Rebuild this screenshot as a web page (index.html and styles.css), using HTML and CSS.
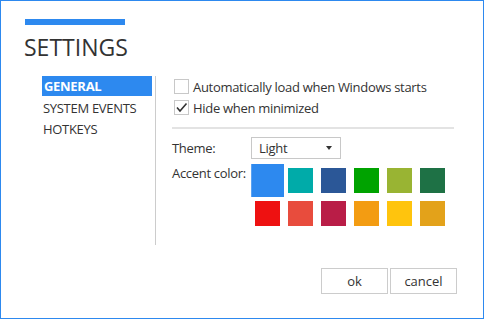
FILE: index.html
```html
<!DOCTYPE html>
<html lang="en">
<head>
    <meta charset="UTF-8">
    <meta name="viewport" content="width=device-width, initial-scale=1.0">
    <title>Settings</title>
    <link rel="stylesheet" href="styles.css">
</head>
<body>
    <div class="window">
        <div class="accent-bar"></div>
        <h1 class="title">SETTINGS</h1>

        <div class="main">
            <ul class="nav">
                <li class="nav-item active">GENERAL</li>
                <li class="nav-item">SYSTEM EVENTS</li>
                <li class="nav-item">HOTKEYS</li>
            </ul>

            <div class="content">
                <label class="check-row">
                    <span class="checkbox"></span>
                    <span>Automatically load when Windows starts</span>
                </label>
                <label class="check-row">
                    <span class="checkbox">
                        <svg width="13" height="13" viewBox="0 0 13 13"><path d="M2 6.5 L5 10 L11.5 2.5" fill="none" stroke="#333" stroke-width="1.6"/></svg>
                    </span>
                    <span>Hide when minimized</span>
                </label>

                <div class="separator"></div>

                <div class="field-row">
                    <span class="field-label">Theme:</span>
                    <div class="dropdown">
                        <span>Light</span>
                        <span class="arrow"></span>
                    </div>
                </div>

                <div class="field-row accent-row">
                    <span class="field-label">Accent color:</span>
                    <div class="swatches">
                        <div class="swatch selected"><span style="background:#2d89ef"></span></div>
                        <div class="swatch"><span style="background:#00aba9"></span></div>
                        <div class="swatch"><span style="background:#2b5797"></span></div>
                        <div class="swatch"><span style="background:#00a300"></span></div>
                        <div class="swatch"><span style="background:#99b433"></span></div>
                        <div class="swatch"><span style="background:#1e7145"></span></div>
                        <div class="swatch"><span style="background:#ee1111"></span></div>
                        <div class="swatch"><span style="background:#e84c3d"></span></div>
                        <div class="swatch"><span style="background:#b91d47"></span></div>
                        <div class="swatch"><span style="background:#f39c12"></span></div>
                        <div class="swatch"><span style="background:#ffc40d"></span></div>
                        <div class="swatch"><span style="background:#e3a21a"></span></div>
                    </div>
                </div>
            </div>
        </div>

        <div class="buttons">
            <button class="btn">ok</button>
            <button class="btn">cancel</button>
        </div>
    </div>
</body>
</html>
```

FILE: styles.css
```css
html, body {
    margin: 0;
    padding: 0;
    background: white;
}

.window {
    width: 484px;
    height: 319px;
    box-sizing: border-box;
    border: 1px solid #2d89ef;
    padding: 18px 25px 0 24px;
    font-family: "Open Sans", sans-serif;
    font-size: 13px;
    letter-spacing: -0.3px;
    color: #333;
    display: flex;
    flex-direction: column;
}

.accent-bar {
    width: 100px;
    height: 6px;
    background: #2d89ef;
}

.title {
    margin: 6px 0 0 -1px;
    font-size: 23px;
    font-weight: 400;
    line-height: 32px;
    letter-spacing: 0;
    color: #333;
}

.main {
    display: flex;
    margin-top: 13px;
    margin-left: 17px;
}

.nav {
    list-style: none;
    margin: 0;
    padding: 0 3px 0 0;
    width: 110px;
    height: 169px;
    border-right: 1px solid #ccc;
}

.nav-item {
    height: 21px;
    line-height: 22px;
    padding-left: 1px;
}

.nav-item.active {
    height: 20px;
    line-height: 20px;
    margin-bottom: 1px;
    padding-left: 2px;
    background: #2d89ef;
    color: white;
    font-weight: bold;
}

.content {
    margin-left: 16px;
    width: 282px;
}

.check-row {
    display: flex;
    align-items: center;
    height: 21px;
    padding-left: 2px;
}

.checkbox {
    width: 13px;
    height: 13px;
    border: 1px solid #c8c8c8;
    margin-right: 4px;
    display: flex;
    align-items: center;
    justify-content: center;
}

.separator {
    height: 2px;
    background: #e3e3e3;
    margin-top: 9px;
}

.field-row {
    display: flex;
    margin-top: 8px;
}

.field-label {
    width: 79px;
    line-height: 22px;
    white-space: nowrap;
}

.dropdown {
    width: 73px;
    height: 20px;
    border: 1px solid #c8c8c8;
    display: flex;
    align-items: center;
    justify-content: space-between;
    padding: 0 8px 0 7px;
}

.arrow {
    width: 0;
    height: 0;
    border-left: 3.5px solid transparent;
    border-right: 3.5px solid transparent;
    border-top: 4px solid #333;
}

.accent-row {
    margin-top: 5px;
}

.accent-row .field-label {
    line-height: 18px;
}

.swatches {
    display: grid;
    grid-template-columns: repeat(6, 33px);
    grid-auto-rows: 33px;
}

.swatch {
    padding: 4px;
}

.swatch span {
    display: block;
    width: 100%;
    height: 100%;
}

.swatch.selected {
    padding: 0;
    border-left: 1px solid #5aa2f2;
    background: #2d89ef;
}

.buttons {
    margin-top: auto;
    margin-bottom: 24px;
    margin-right: 1px;
    display: flex;
    justify-content: flex-end;
    gap: 2px;
}

.btn {
    width: 67px;
    height: 26px;
    border: 1px solid #ccc;
    background: white;
    font-family: "Open Sans", sans-serif;
    font-size: 13px;
    color: #333;
    cursor: pointer;
}
```
